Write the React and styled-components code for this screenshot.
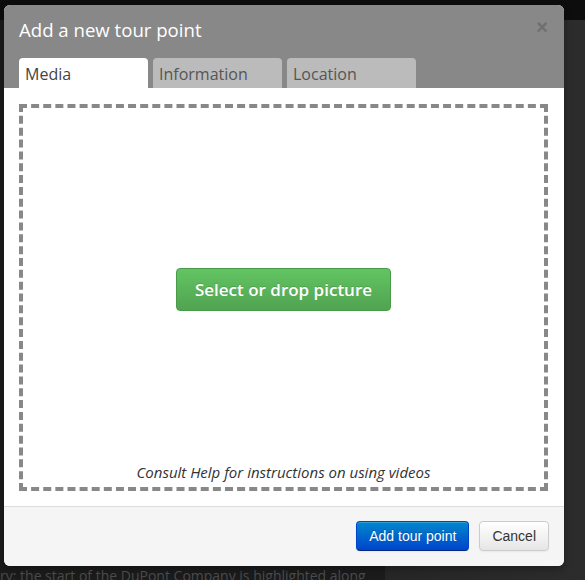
import React, {useState} from "react";
import styled, {createGlobalStyle, css} from "styled-components";

const GlobalStyle = createGlobalStyle`
  html, body {
    margin: 0;
    padding: 0;
  }
  body {
    background: #1f1f1f;
    font-family: "Open Sans", "Liberation Sans", sans-serif;
    height: 580px;
    overflow: hidden;
  }
`;

const Page = styled.div`
  position: relative;
  width: 585px;
  height: 580px;
  background:
    linear-gradient(#0d0d0d 0, #0d0d0d 20px, transparent 20px),
    linear-gradient(90deg, #1b1b1b 0, #1b1b1b 385px, #262626 385px, #2c2c2c 100%);
  padding: 5px 0 0 4px;
  box-sizing: border-box;
`;

const BackText = styled.div`
  position: absolute;
  left: 0;
  top: 566px;
  font-size: 14px;
  color: #4a4a4a;
  white-space: nowrap;
`;

const Modal = styled.div`
  position: relative;
  width: 560px;
  border-radius: 6px;
  overflow: hidden;
  background: #fff;
  box-shadow: 0 3px 7px rgba(0, 0, 0, 0.3);
`;

const Header = styled.div`
  background: #888;
  padding: 13px 15px 0;
  position: relative;
`;

const Title = styled.h3`
  margin: 0;
  font-size: 18.6px;
  font-weight: 400;
  line-height: 24px;
  color: #fff;
`;

const Close = styled.span`
  position: absolute;
  top: 12px;
  right: 16px;
  font-family: "Liberation Sans", sans-serif;
  font-size: 20px;
  font-weight: 700;
  color: #6f6f6f;
  line-height: 20px;
`;

const Tabs = styled.div`
  display: flex;
  gap: 5px;
  margin-top: 16px;
`;

const Tab = styled.div`
  width: 129px;
  height: 30px;
  box-sizing: border-box;
  padding: 5px 0 0 6px;
  border-radius: 4px 4px 0 0;
  font-size: 16px;
  line-height: 22px;
  color: #555;
  background: #bbb;
  ${p => p.active && css`
    background: #fff;
    color: #444;
  `}
`;

const Body = styled.div`
  padding: 16px 16px 15px 15px;
`;

const DropZone = styled.div`
  height: 387px;
  box-sizing: border-box;
  border: 4px dashed #888;
  display: flex;
  flex-direction: column;
`;

const Center = styled.div`
  flex: 1;
  display: flex;
  align-items: center;
  justify-content: center;
  padding-top: 8px;
`;

const GreenButton = styled.button`
  width: 215px;
  height: 43px;
  border: 1px solid #4a9a4a;
  border-radius: 4px;
  background: linear-gradient(#62c462, #51a351);
  color: #fff;
  font-family: "Open Sans", sans-serif;
  font-size: 17px;
  font-weight: 600;
  cursor: pointer;
  text-shadow: 0 -1px 0 rgba(0, 0, 0, 0.15);
`;

const Help = styled.div`
  text-align: center;
  font-size: 15px;
  font-style: italic;
  color: #333;
  line-height: 20px;
  padding-bottom: 5px;
`;

const Footer = styled.div`
  background: #f5f5f5;
  border-top: 1px solid #ddd;
  padding: 14px 15px 15px;
  display: flex;
  justify-content: flex-end;
  gap: 10px;
`;

const Button = styled.button`
  height: 30px;
  padding: 0 12px;
  border-radius: 4px;
  font-family: "Liberation Sans", Arial, sans-serif;
  font-size: 14px;
  cursor: pointer;
  border: 1px solid #ccc;
  background: linear-gradient(#fff, #e6e6e6);
  color: #333;
  box-shadow: inset 0 1px 0 rgba(255,255,255,0.2), 0 1px 2px rgba(0,0,0,0.05);
  ${p => p.primary && css`
    border-color: #0044cc #0044cc #002a80;
    background: linear-gradient(#0088cc, #0044cc);
    color: #fff;
    text-shadow: 0 -1px 0 rgba(0,0,0,0.25);
  `}
`;

export default function App() {
    const [tab, setTab] = useState('Media');
    const tabs = ['Media', 'Information', 'Location'];

    return (
        <>
            <GlobalStyle/>
            <Page>
                <Modal>
                    <Header>
                        <Title>Add a new tour point</Title>
                        <Close>×</Close>
                        <Tabs>
                            {tabs.map(t => (
                                <Tab key={t} active={t === tab} onClick={() => setTab(t)}>{t}</Tab>
                            ))}
                        </Tabs>
                    </Header>
                    <Body>
                        <DropZone>
                            <Center>
                                <GreenButton>Select or drop picture</GreenButton>
                            </Center>
                            <Help>Consult Help for instructions on using videos</Help>
                        </DropZone>
                    </Body>
                    <Footer>
                        <Button primary>Add tour point</Button>
                        <Button>Cancel</Button>
                    </Footer>
                </Modal>
                <BackText>ry; the start of the DuPont Company is highlighted along</BackText>
            </Page>
        </>
    );
}
